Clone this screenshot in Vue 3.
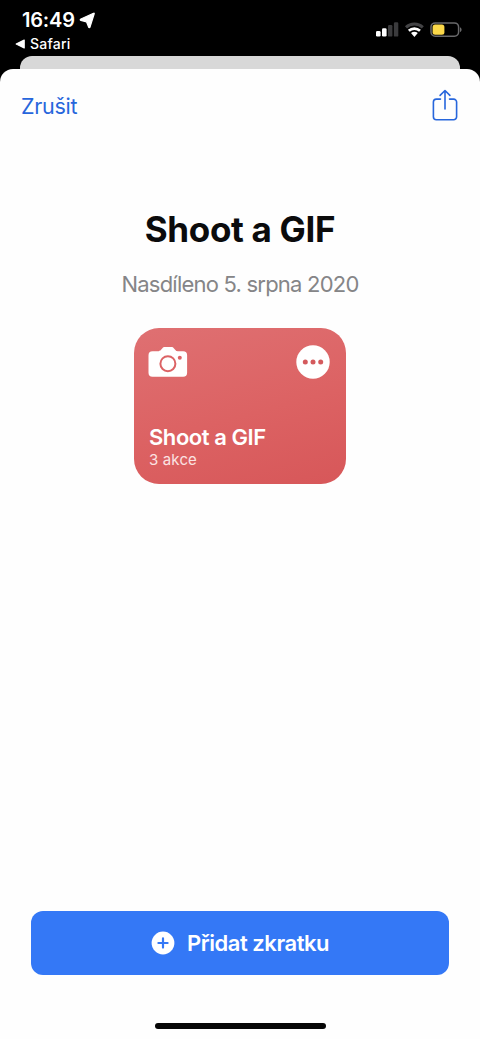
<script setup>
const title = 'Shoot a GIF'
</script>

<template>
  <div class="screen">
    <header class="status">
      <div class="status-left">
        <div class="clock">
          <span class="time">16:49</span>
          <svg class="location" width="17" height="17" viewBox="0 0 17 17"><path d="M15.2 1.8 11 15c-.2.8-1 .8-1.4.1L7.5 9.8 1.9 8.4c-.9-.3-.9-1 0-1.4L14.5 1.3c.6-.3.9 0 .7.5Z" fill="#fff" stroke="#fff" stroke-width="1.2" stroke-linejoin="round" /></svg>
        </div>
        <div class="back">
          <svg width="10" height="10" viewBox="0 0 10 10"><path d="M1.2 5 9.2 1.1v7.8Z" fill="#fff" stroke="#fff" stroke-width="1.2" stroke-linejoin="round" /></svg>
          <span class="back-label">Safari</span>
        </div>
      </div>
      <svg class="indicators" width="90" height="20" viewBox="0 0 90 20">
        <g fill="#fff">
          <rect x="1" y="11" width="4.6" height="5.6" rx="1.3" />
          <rect x="7" y="8.2" width="4.6" height="8.4" rx="1.3" />
        </g>
        <g fill="#3b3b3d">
          <rect x="13" y="5.1" width="4.4" height="11.5" rx="1.2" />
          <rect x="18.9" y="2.3" width="4.4" height="14.3" rx="1.2" />
        </g>
        <path d="M31 7.3a12.2 12.2 0 0 1 16.8 0" fill="none" stroke="#434345" stroke-width="3" />
        <path d="M33.8 10.7a8.3 8.3 0 0 1 11.2 0" fill="none" stroke="#fff" stroke-width="2.7" />
        <path d="M36 13.1a5.3 5.3 0 0 1 6.8 0L39.4 17Z" fill="#fff" />
        <rect x="56" y="2.9" width="27.6" height="13.4" rx="4.2" fill="none" stroke="#69696b" stroke-width="1.5" />
        <rect x="57.6" y="4.5" width="11.8" height="10.2" rx="2.5" fill="#fbd849" />
        <path d="M85 7.2c2.1.8 2.1 4 0 4.8Z" fill="#69696b" />
      </svg>
    </header>
    <div class="behind"></div>
    <main class="sheet">
      <nav class="nav">
        <span class="cancel">Zrušit</span>
        <svg width="26" height="32" viewBox="0 0 26 32" fill="none" stroke="#2766dc" stroke-width="1.6" stroke-linecap="round" stroke-linejoin="round">
          <path d="M8.5 10.1H4.4a3 3 0 0 0-3 3v14.7a3 3 0 0 0 3 3h17.2a3 3 0 0 0 3-3V13.1a3 3 0 0 0-3-3h-4.1" />
          <path d="M13 20V1.6M8.1 6.4 13 1.5l4.9 4.9" />
        </svg>
      </nav>
      <h1 class="title"><span>{{ title }}</span></h1>
      <p class="date"><span>Nasdíleno 5. srpna 2020</span></p>
      <section class="card">
        <div class="card-icons">
          <svg width="40" height="32" viewBox="0 0 40 32">
            <path d="M4.5 5.3h6.1c1 0 1.6-.4 2.2-1.2l1.4-1.7c.8-1 1.5-1.4 2.8-1.4h6.2c1.3 0 2 .4 2.8 1.4l1.4 1.7c.6.8 1.2 1.2 2.2 1.2h5.5a4 4 0 0 1 4 4v17.5a4 4 0 0 1-4 4H4.5a4 4 0 0 1-4-4V9.3a4 4 0 0 1 4-4Z" fill="#fff" />
            <circle cx="19.9" cy="17.7" r="7.5" fill="none" stroke="#dc6365" stroke-width="2" />
            <circle cx="31.8" cy="11.8" r="2" fill="#dc6365" />
          </svg>
          <svg width="34" height="34" viewBox="0 0 34 34">
            <circle cx="17" cy="17" r="16.7" fill="#fff" />
            <g fill="#d45a5d"><circle cx="9.3" cy="17" r="2.5" /><circle cx="17" cy="17" r="2.5" /><circle cx="24.7" cy="17" r="2.5" /></g>
          </svg>
        </div>
        <div class="card-title">{{ title }}</div>
        <div class="card-sub">3 akce</div>
      </section>
      <button class="add">
        <svg width="24" height="24" viewBox="0 0 24 24"><circle cx="12" cy="12" r="11.4" fill="#fff" /><path d="M12 7.4v9.2M7.4 12h9.2" stroke="#3478f6" stroke-width="2.2" stroke-linecap="round" /></svg>
        <span class="add-label">Přidat zkratku</span>
      </button>
      <div class="home"></div>
    </main>
  </div>
</template>

<style>
body { margin: 0; background: #000; }
</style>

<style scoped>
.screen { width: 480px; height: 1039px; overflow: hidden; background: #000; display: flex; flex-direction: column; font-family: Inter, "Liberation Sans", sans-serif; }
.status { height: 56px; box-sizing: border-box; padding: 8px 15px 0; display: flex; justify-content: space-between; color: #fff; }
.clock { display: flex; height: 24px; padding-left: 7px; gap: 4px; }
.time { font-size: 20px; line-height: 24px; font-weight: 600; letter-spacing: -0.2px; }
.location { margin-top: 4px; }
.back { display: flex; align-items: center; gap: 5px; height: 24px; }
.back-label { font-size: 14px; line-height: 24px; font-weight: 500; letter-spacing: 0.25px; }
.indicators { margin-top: 12px; }
.behind { flex: none; height: 13px; margin: 0 20px; border-radius: 12px 12px 0 0; background: #d8d8d8; }
.sheet { flex: 1; display: flex; flex-direction: column; align-items: center; background: #fefefe; border-radius: 13px 13px 0 0; }
.nav { width: 100%; box-sizing: border-box; height: 72px; padding: 0 22px 0 21px; display: flex; align-items: center; justify-content: space-between; }
.cancel { margin-top: 1px; font-size: 21.5px; line-height: 28px; letter-spacing: -0.3px; color: #2766dc; }
.title { margin: 66px 0 0; font-size: 35px; line-height: 44px; font-weight: 700; letter-spacing: -0.3px; color: #0b0b0c; }
.date { margin: 19px 0 0; font-size: 22px; line-height: 28px; letter-spacing: -0.78px; color: #858587; }
.card { box-sizing: border-box; width: 212px; height: 155.5px; margin-top: 30px; padding: 16.5px 16px 0 14px; border-radius: 25px; background: linear-gradient(165deg, #df7072 0%, #dc6263 55%, #d75759 100%); color: #fff; }
.card-icons { display: flex; justify-content: space-between; align-items: flex-start; height: 78px; }
.card-icons svg:first-child { margin-top: 1px; }
.card-title { padding-left: 1px; font-size: 22px; line-height: 28px; font-weight: 600; letter-spacing: -0.45px; }
.card-sub { padding-left: 1px; font-size: 15px; line-height: 18px; letter-spacing: 0.15px; color: #fbe3e3; }
.add { width: 418px; height: 64px; margin: auto 0 0; padding: 0; border: 0; border-radius: 12px; background: #3478f6; color: #fff; font-family: inherit; display: flex; align-items: center; justify-content: center; gap: 12px; }
.add-label { font-size: 22px; line-height: 28px; font-weight: 600; letter-spacing: -0.45px; }
.home { flex: none; width: 171px; height: 6px; margin: 47.5px 0 10.5px; border-radius: 3px; background: #060606; }
.title, .date, .card-title, .card-sub, .add-label, .time, .back-label, .cancel { white-space: nowrap; }
</style>
